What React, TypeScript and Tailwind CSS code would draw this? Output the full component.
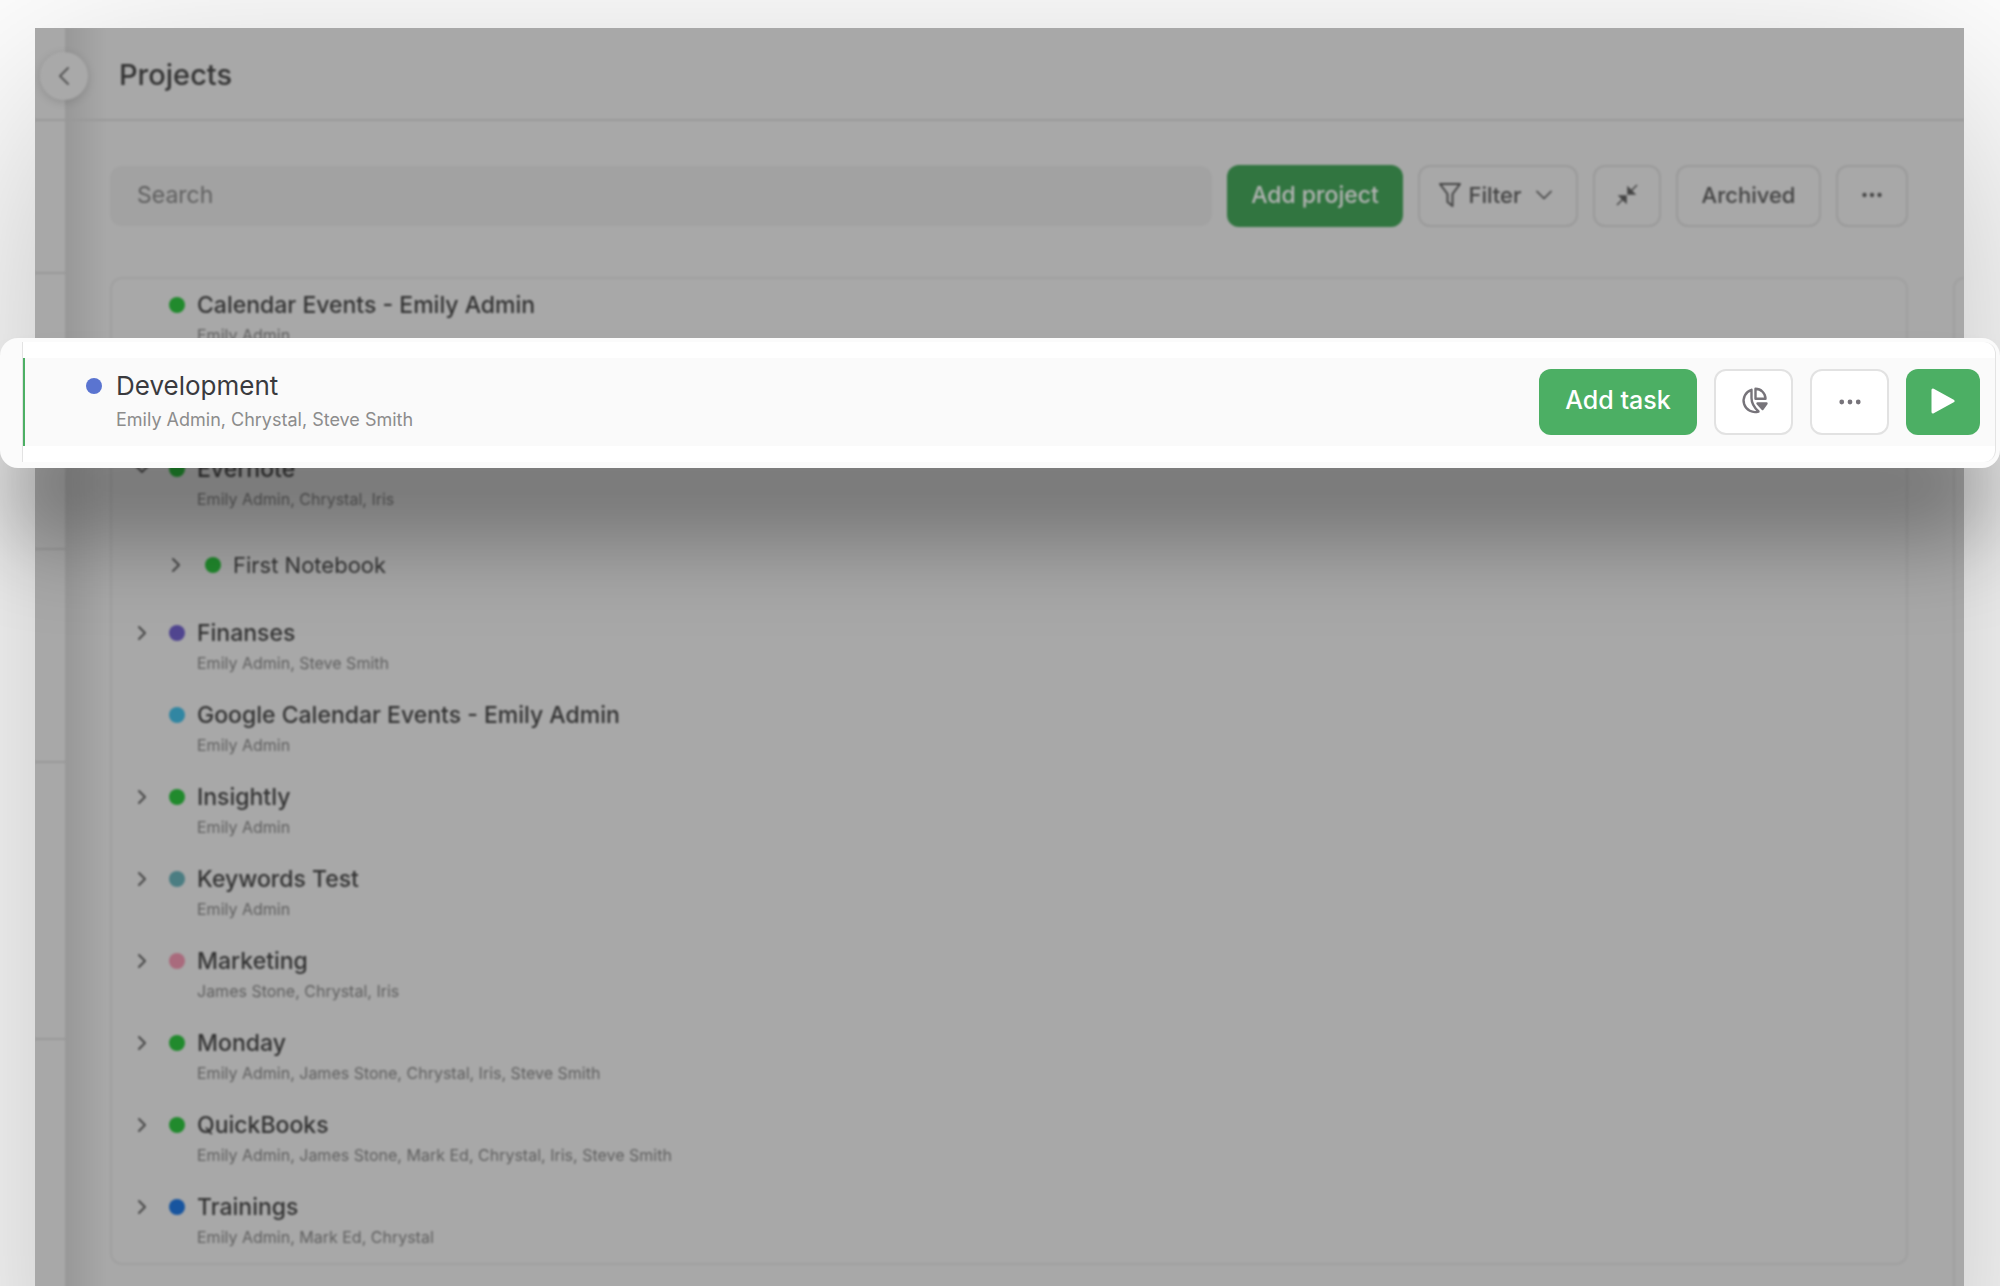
import { ChevronDown, ChevronLeft, ChevronRight } from "lucide-react";

type Project = { name: string; people?: string; dot: string; open?: boolean; leaf?: boolean; child?: boolean; lifted?: boolean };

const projects: Project[] = [
  { name: "Calendar Events - Emily Admin", people: "Emily Admin", dot: "bg-[#218a2d]", leaf: true },
  { name: "Development", dot: "bg-[#5a74d0]", lifted: true },
  { name: "Evernote", people: "Emily Admin, Chrystal, Iris", dot: "bg-[#218a2d]", open: true },
  { name: "First Notebook", dot: "bg-[#218a2d]", child: true },
  { name: "Finanses", people: "Emily Admin, Steve Smith", dot: "bg-[#514690]" },
  { name: "Google Calendar Events - Emily Admin", people: "Emily Admin", dot: "bg-[#3186a2]", leaf: true },
  { name: "Insightly", people: "Emily Admin", dot: "bg-[#218a2d]" },
  { name: "Keywords Test", people: "Emily Admin", dot: "bg-[#4b7d82]" },
  { name: "Marketing", people: "James Stone, Chrystal, Iris", dot: "bg-[#a96b7d]" },
  { name: "Monday", people: "Emily Admin, James Stone, Chrystal, Iris, Steve Smith", dot: "bg-[#218a2d]" },
  { name: "QuickBooks", people: "Emily Admin, James Stone, Mark Ed, Chrystal, Iris, Steve Smith", dot: "bg-[#218a2d]" },
  { name: "Trainings", people: "Emily Admin, Mark Ed, Chrystal", dot: "bg-[#18559f]" },
];

const toolButton = "flex h-[62px] items-center justify-center rounded-xl border-2 border-[#9a9a9a] pb-0.5 text-[22px] font-medium text-[#444]";

function Dots({ className }: { className: string }) {
  return (
    <svg viewBox="0 0 24 24" className={className} fill="currentColor">
      <circle cx="3" cy="12" r="2.6" /><circle cx="12" cy="12" r="2.6" /><circle cx="21" cy="12" r="2.6" />
    </svg>
  );
}

function PieMenuIcon() {
  return (
    <svg viewBox="0 0 28 28" className="size-7" fill="none" stroke="#77747a" strokeWidth="2.4" strokeLinejoin="round">
      <path d="M11.5 2.8A11.4 11.4 0 1 0 18.5 24.5Q11.5 18 11.5 11Z" />
      <path d="M15.5 1.8A10 10 0 0 1 25.5 11.8H15.5Z" />
      <path d="M17.5 16.5H26.5L22.5 22Z" fill="#77747a" />
    </svg>
  );
}

function ProjectRow({ project }: { project: Project }) {
  const { name, people, dot, open, leaf, child, lifted } = project;
  // the lifted row is drawn above the list, only its slot stays here
  if (lifted) return <li className="h-[82px]" />;
  return (
    <li className={`flex h-[82px] items-center pr-6 pb-0.5 ${child ? "pl-[52px]" : "pl-[18px]"}`}>
      <div>
        <div className="flex h-8 items-center">
          {leaf ? <span className="w-[39px]" /> : (
            <button aria-label={`Toggle ${name}`} className={`flex text-[#484848] ${child ? "w-[41px]" : "w-[39px]"}`}>
              {open ? <ChevronDown size={24} /> : <ChevronRight size={24} />}
            </button>
          )}
          <span className={`mr-3 size-4 rounded-full ${dot}`} />
          <span className={`leading-8 text-[#333] ${child ? "text-[22px]" : "text-[23px] font-medium"}`}>{name}</span>
        </div>
        {people && <div className="pl-[67px] text-[16px] leading-7 text-[#606060]">{people}</div>}
      </div>
    </li>
  );
}

function LiftedRow() {
  return (
    <section className="absolute inset-x-0 top-[338px] flex h-[130px] rounded-[18px] bg-[#fbfbfb] pt-1 pr-1 pb-1.5 pl-[22px] shadow-[0_80px_90px_-12px_rgba(0,0,0,0.34)]">
      <div className="flex flex-1 items-center rounded-r-xl border-x border-[#e3e3e3] bg-white">
        <div className="flex h-[88px] flex-1 items-center justify-between border-l-2 border-[#4caf64] bg-[#fafafa] pr-[15px] pl-[61px]">
          <div>
            <div className="flex items-center">
              <span className="mr-[14px] size-4 rounded-full bg-[#5a74d0]" />
              <span className="text-[26px] leading-9 text-[#3a3a3e]">Development</span>
            </div>
            <div className="pl-[30px] text-[18px] leading-8 text-[#8c8c8c]">Emily Admin, Chrystal, Steve Smith</div>
          </div>
          <div className="flex gap-[17px]">
            <button className="h-[66px] w-[158px] rounded-xl bg-[#4caf64] pb-0.5 text-[25px] font-medium text-white">Add task</button>
            <button aria-label="Reports" className="flex h-[66px] w-[79px] items-center justify-center rounded-xl border-2 border-[#e2e2e2] bg-white pb-0.5"><PieMenuIcon /></button>
            <button aria-label="More" className="flex h-[66px] w-[79px] items-center justify-center rounded-xl border-2 border-[#e2e2e2] bg-white text-[#77747a]"><Dots className="size-[22px]" /></button>
            <button aria-label="Start timer" className="flex h-[66px] w-[74px] items-center justify-center rounded-xl bg-[#4caf64] pb-0.5">
              <svg viewBox="0 0 24 28" className="h-7 w-6" fill="#fff" stroke="#fff" strokeWidth="3" strokeLinejoin="round"><path d="M2 3V25L22 14Z" /></svg>
            </button>
          </div>
        </div>
      </div>
    </section>
  );
}

export default function App() {
  return (
    <div className="relative h-screen overflow-hidden bg-white pt-7 pr-9 pl-[35px] font-['Inter',sans-serif]">
      <div className="h-[1400px] overflow-hidden bg-[#a8a8a8] shadow-[0_67px_210px_rgba(0,0,0,0.27)]">
        <div className="flex h-full blur-[1px]">
          <aside className="w-[30px]">
            <div className="h-[93px] border-b-2 border-[#989898]" />
            <div className="h-[153px] border-b-2 border-[#989898]" />
            <div className="h-[276px] border-b-2 border-[#989898]" />
            <div className="h-[213px] border-b-2 border-[#989898]" />
            <div className="h-[277px] border-b-2 border-[#989898]" />
          </aside>
          <main className="relative flex-1 bg-linear-to-r from-[#989898] to-[#a8a8a8] to-[42px]">
            <button aria-label="Collapse" className="absolute top-6 -left-[25px] flex size-12 items-center justify-center rounded-full bg-[#a9a9a9] text-[#555] shadow-[0_2px_10px_rgba(0,0,0,0.15)]">
              <ChevronLeft size={32} strokeWidth={1.5} />
            </button>
            <header className="flex h-[93px] items-center border-b-2 border-[#989898] pt-0.5 pl-[54px]">
              <h1 className="text-[29px] font-medium text-[#333]">Projects</h1>
            </header>
            <div className="flex">
              <div className="flex-1 pt-11 pr-[45px] pl-[45px]">
                <div className="mb-[50px] flex h-[62px] items-center gap-[15px]">
                  <input aria-label="Search" placeholder="Search" className="h-[60px] min-w-0 flex-1 rounded-xl bg-[#a2a2a2] px-[27px] pb-0.5 text-[23px] placeholder:text-[#606060]" />
                  <button className="h-[62px] w-[176px] rounded-xl bg-[#317540] pb-0.5 text-[23px] font-medium text-[#b4b4b4]">Add project</button>
                  <button className={`${toolButton} w-[160px]`}>
                    <svg viewBox="0 0 24 26" className="h-[26px] w-6" fill="none" stroke="currentColor" strokeWidth="2" strokeLinejoin="round"><path d="M2 2H22L14.5 12V24L9.5 20V12Z" /></svg>
                    <span className="mr-2 ml-1.5">Filter</span>
                    <ChevronDown size={28} strokeWidth={1.5} />
                  </button>
                  <button aria-label="Collapse all" className={`${toolButton} w-[68px]`}>
                    <svg viewBox="0 0 24 24" className="size-6" fill="currentColor" stroke="currentColor" strokeWidth="1.5"><path d="M22 2L15 9" /><path d="M2 22L9 15" /><path d="M13 4.5V11H19.5Z" /><path d="M4.5 13H11V19.5Z" /></svg>
                  </button>
                  <button className={`${toolButton} w-[145px]`}>Archived</button>
                  <button aria-label="More options" className={`${toolButton} w-[72px]`}><Dots className="size-5" /></button>
                </div>
                <ul className="rounded-xl border-2 border-[#a0a0a0]">
                  {projects.map((p) => <ProjectRow key={p.name} project={p} />)}
                </ul>
              </div>
              <div className="mt-[156px] h-[1100px] w-[11px] rounded-tl-xl border-t-2 border-l-2 border-[#a0a0a0]" />
            </div>
          </main>
        </div>
      </div>
      <LiftedRow />
    </div>
  );
}
